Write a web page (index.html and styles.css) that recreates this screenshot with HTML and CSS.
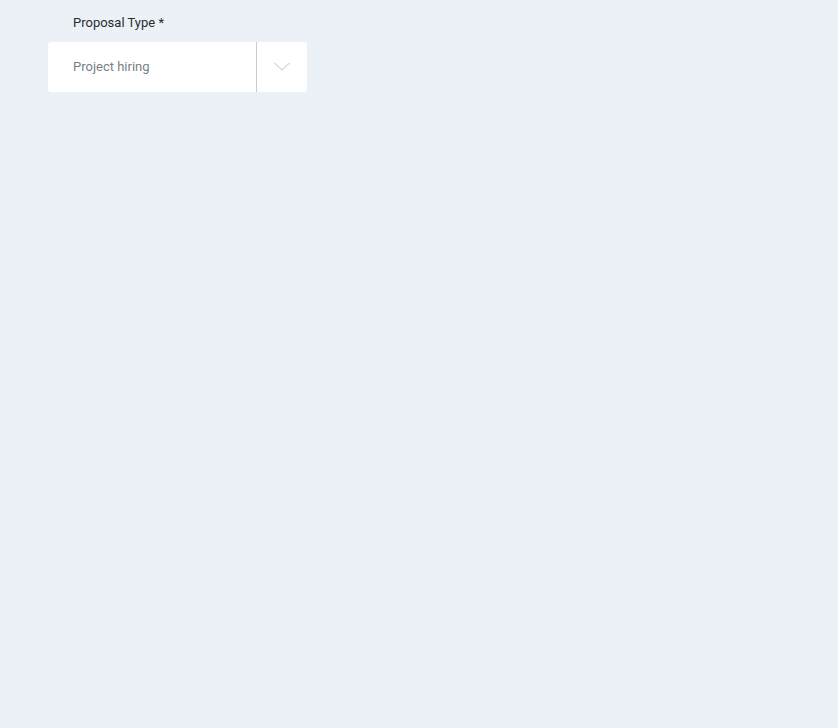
FILE: index.html
```html
<!DOCTYPE html>
<html>
<head>
<meta charset="utf-8">
<link rel="stylesheet" href="styles.css">
</head>
<body>
<div class="field">
  <label class="label">Proposal Type *</label>
  <div class="select">
    <div class="value">Project hiring</div>
    <div class="indicator">
      <svg width="18" height="10" viewBox="0 0 18 10"><path d="M1.5 1 L9 8 L16.5 1" fill="none" stroke="#d5d8dd" stroke-width="1.2"/></svg>
    </div>
  </div>
</div>
</body>
</html>
```
FILE: styles.css
```css
html, body { margin: 0; padding: 0; }
body {
  background: #ecf0f7;
  font-family: Roboto, "Liberation Sans", sans-serif;
  width: 838px;
  height: 728px;
}
.field {
  padding: 14px 0 0 48px;
  width: 259px;
}
.label {
  display: block;
  padding-left: 25px;
  font-size: 13px;
  line-height: 17px;
  color: #2b2b2b;
  margin-bottom: 11px;
}
.select {
  display: flex;
  height: 50px;
  background: #fff;
  border-radius: 3px;
}
.value {
  flex: 1;
  display: flex;
  align-items: center;
  padding-left: 25px;
  padding-bottom: 2px;
  font-size: 13px;
  color: #7a7f86;
  border-right: 1px solid #c8ccd2;
}
.indicator {
  width: 50px;
  display: flex;
  align-items: center;
  justify-content: center;
}
```
